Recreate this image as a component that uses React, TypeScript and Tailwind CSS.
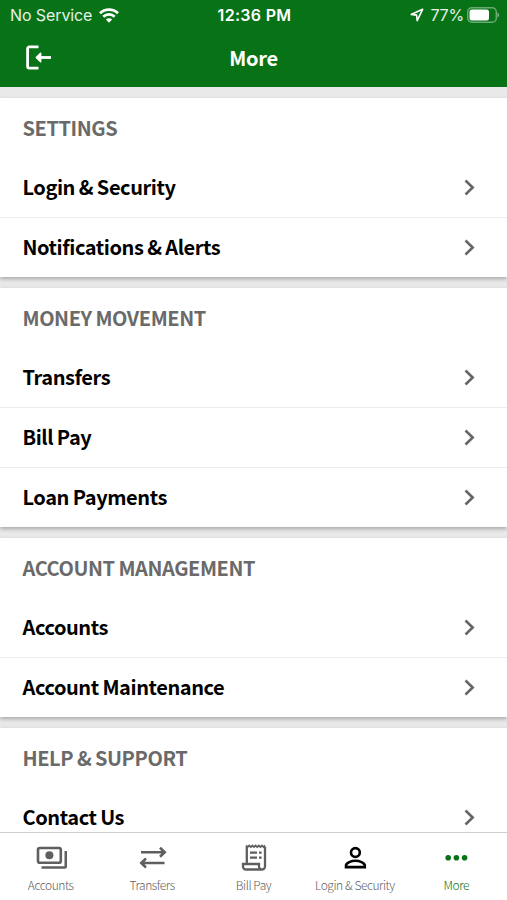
import type { ReactNode } from 'react';
import clsx from 'clsx';

interface MenuSection {
  title: string;
  items: string[];
}

const sections: MenuSection[] = [
  { title: 'SETTINGS', items: ['Login & Security', 'Notifications & Alerts'] },
  { title: 'MONEY MOVEMENT', items: ['Transfers', 'Bill Pay', 'Loan Payments'] },
  { title: 'ACCOUNT MANAGEMENT', items: ['Accounts', 'Account Maintenance'] },
  { title: 'HELP & SUPPORT', items: ['Contact Us'] },
];

function StatusBar() {
  return (
    <div className="grid h-[30px] grid-cols-3 items-center pr-2 pl-2.5 font-['Inter',sans-serif] text-[16px] text-white/90">
      <div className="flex items-center gap-[7px] whitespace-nowrap">
        <span className="tracking-[-0.1px]">No Service</span>
        <svg width="20" height="15" viewBox="0 0 20 15" fill="none" stroke="white" strokeWidth="2.7">
          <path d="M1 5.3a12.8 12.8 0 0 1 18 0" />
          <path d="M4.3 8.8a8.1 8.1 0 0 1 11.4 0" />
          <path d="M10 14.7 6.9 11.6a4.4 4.4 0 0 1 6.2 0Z" fill="white" stroke="none" />
        </svg>
      </div>
      <span className="text-center font-semibold tracking-[0.3px] whitespace-nowrap text-white">12:36 PM</span>
      <div className="flex items-center justify-end">
        <svg width="14" height="14" viewBox="0 0 14 14" fill="none" stroke="white" strokeWidth="1.6" strokeLinejoin="round">
          <path d="M12.6 1.3 1.2 6.4l5.4.7.6 5.5Z" />
        </svg>
        <span className="ml-1.5 tracking-[-0.2px]">77%</span>
        <svg className="ml-[3px]" width="32" height="16" viewBox="0 0 32 16" fill="none">
          <rect x="0.7" y="0.7" width="28.6" height="14.6" rx="4.2" stroke="white" strokeOpacity="0.4" strokeWidth="1.4" />
          <rect x="2.5" y="2.5" width="19.5" height="11" rx="2.5" fill="white" />
          <path d="M30.5 5.5c2 .8 2 4.2 0 5Z" fill="white" fillOpacity="0.5" />
        </svg>
      </div>
    </div>
  );
}

function Header() {
  return (
    <header className="h-[87px] shrink-0 bg-[#087216] text-white">
      <StatusBar />
      <div className="grid h-[56px] grid-cols-3 items-center px-[25px]">
        <svg width="28" height="28" viewBox="0 0 28 28" fill="none" stroke="currentColor" strokeWidth="2.8" strokeLinejoin="round">
          <path d="M13.5 2.9H4.2a1.6 1.6 0 0 0-1.6 1.6v18a1.6 1.6 0 0 0 1.6 1.6h9.3" />
          <path d="M26 13.5H12" />
          <path d="m15.6 9.3-4.3 4.2 4.3 4.2Z" fill="currentColor" strokeWidth="1.6" />
        </svg>
        <h1 className="text-center text-[20px] font-bold tracking-[-0.3px]">More</h1>
      </div>
    </header>
  );
}

function Section({ title, items }: MenuSection) {
  return (
    <section className="bg-white shadow-[0_2px_4px_rgba(0,0,0,0.28)]">
      <h2 className="flex h-[59px] items-center pl-[22.5px] text-[20px] font-bold tracking-[-0.42px] [word-spacing:-0.4px] text-[#6a6a6a]">
        {title}
      </h2>
      <ul>
        {items.map((item) => (
          <li
            key={item}
            className="flex h-[60px] items-center justify-between border-t border-[#ececec] pr-8 pb-px pl-[22.5px] first:border-t-0 first:pb-0"
          >
            <span className="text-[20px] font-bold tracking-[-0.42px] [word-spacing:-0.4px] text-black">{item}</span>
            <svg width="11" height="17" viewBox="0 0 11 17" fill="none" stroke="#666" strokeWidth="2.6">
              <path d="m1.5 1.5 7.2 7-7.2 7" />
            </svg>
          </li>
        ))}
      </ul>
    </section>
  );
}

interface TabProps {
  label: string;
  className?: string;
  children: ReactNode;
}

function Tab({ label, className, children }: TabProps) {
  return (
    <div className={clsx('flex flex-col items-center pt-2.5', className)}>
      <svg width="32" height="30" viewBox="0 0 32 30" fill="none" stroke="currentColor" strokeWidth="2.6">
        {children}
      </svg>
      <span className="mt-[3px] text-[12px] leading-[18px] font-light tracking-[-0.45px] whitespace-nowrap">{label}</span>
    </div>
  );
}

function TabBar() {
  return (
    <nav className="grid h-[68px] shrink-0 grid-cols-5 border-t border-[#cfcfcf] bg-white text-[#5f5f5f]">
      <Tab label="Accounts">
        <rect x="3" y="5" width="22.8" height="14.8" rx="1.8" />
        <circle cx="14.4" cy="12.3" r="4" fill="currentColor" stroke="none" />
        <path d="M6.5 24.5h23.3a1 1 0 0 0 1-1V8" />
      </Tab>
      <Tab label="Transfers">
        <path d="M5 9.3h23M24 4.8l4.7 4.5-4.7 4.5" />
        <path d="M28.5 20H6M10 15.5 5.3 20l4.7 4.5" />
      </Tab>
      <Tab label="Bill Pay">
        <g strokeWidth="2.3">
          <path d="M9.8 20V4M28 4v19.5a3 3 0 0 1-3 3H9a3 3 0 0 1-3-3V21h16v2.5a3 3 0 0 0 3 3" />
          <path d="m9 2.5 1.6 1.6 1.6-1.6 1.6 1.6 1.6-1.6L17 4.1l1.6-1.6 1.6 1.6 1.6-1.6 1.6 1.6L25 2.5l1.6 1.6 1.6-1.6" strokeWidth="1.8" />
          <path d="M13 9.6h7M13 14.6h7M22 9.6h2.6M22 14.6h2.6" />
        </g>
      </Tab>
      <Tab label="Login & Security">
        <g stroke="black">
          <circle cx="16.4" cy="9.5" r="4.4" />
          <path d="M7 24.1v-1.5c0-3 5.6-4.8 9.4-4.8s9.4 1.8 9.4 4.8v1.5Z" />
        </g>
      </Tab>
      <Tab label="More" className="text-[#087216]">
        <g fill="currentColor" stroke="none">
          <circle cx="8.2" cy="14.8" r="2.8" />
          <circle cx="16.4" cy="14.8" r="2.8" />
          <circle cx="24.6" cy="14.8" r="2.8" />
        </g>
      </Tab>
    </nav>
  );
}

export default function App() {
  return (
    <div className="flex h-[900px] w-[507px] flex-col overflow-hidden bg-[#e9e9e9] font-['Noto_Sans_CJK_SC',sans-serif]">
      <Header />
      <main className="flex min-h-0 flex-1 flex-col gap-[11px] overflow-hidden pt-[11px]">
        {sections.map((section) => (
          <Section key={section.title} {...section} />
        ))}
      </main>
      <TabBar />
    </div>
  );
}
